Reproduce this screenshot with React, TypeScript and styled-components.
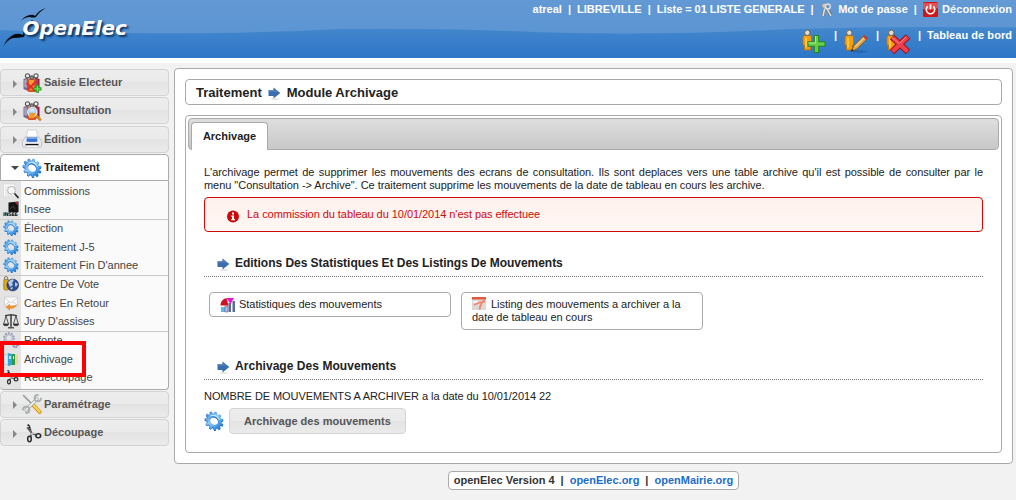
import React from "react";
import styled, { createGlobalStyle, css } from "styled-components";

const Global = createGlobalStyle`
  * { box-sizing: border-box; }
  body { margin: 0; width: 1016px; height: 500px; overflow: hidden; background: #f2f2f2;
    font-family: "Liberation Sans", Arial, sans-serif; font-size: 11px; line-height: 13px; color: #222; }
`;

/* ---------- icons ---------- */
type IconProps = { size: number };

const gearTeeth = 11;
const gearPath = Array.from({ length: gearTeeth }, (_, i) => {
  const step = (Math.PI * 2) / gearTeeth;
  const at = (r: number, k: number) => {
    const a = (i + k) * step;
    return `${(10 + r * Math.cos(a)).toFixed(2)} ${(10 + r * Math.sin(a)).toFixed(2)}`;
  };
  return `${i ? "L" : "M"}${at(7.6, 0)}L${at(9.9, 0.15)}L${at(9.9, 0.5)}L${at(7.6, 0.65)}`;
}).join("") + "ZM14.600 10A4.600 4.600 0 1 0 5.400 10A4.600 4.600 0 1 0 14.600 10Z";

const Gear = ({ size }: IconProps) => (
  <svg width={size} height={size} viewBox="0 0 20 20">
    <defs>
      <linearGradient id="gearFill" x1="0" y1="0" x2="1" y2="0">
        <stop offset="0" stopColor="#3c8ee0" /><stop offset=".4" stopColor="#8fd0ff" /><stop offset=".7" stopColor="#56a9f2" /><stop offset="1" stopColor="#1c74cf" />
      </linearGradient>
    </defs>
    <g transform="rotate(45 10 10) translate(0 1.200) scale(1 .86)">
      <path d={gearPath} fill="#1f66b8" fillRule="evenodd" transform="translate(.5 .9)" />
      <path d={gearPath} fill="url(#gearFill)" fillRule="evenodd" stroke="#3a86d3" strokeWidth=".4" />
      <path d="M4 9A6.300 6.300 0 0 1 13 4.600" fill="none" stroke="#c4e8ff" strokeWidth="1.100" />
    </g>
  </svg>
);

const GreyGears = ({ size }: IconProps) => (
  <svg width={size} height={size} viewBox="0 0 16 16" fill="none">
    <circle cx="6" cy="6" r="4.8" stroke="#8d93ac" strokeWidth="2" strokeDasharray="1.8 1.2" />
    <circle cx="6" cy="6" r="3.5" stroke="#b8bfd2" strokeWidth="2" />
    <circle cx="12.3" cy="12.5" r="2.6" stroke="#777d9a" strokeWidth="1.8" strokeDasharray="1.5 .8" />
    <circle cx="12.3" cy="12.5" r="1.7" stroke="#a9aec4" strokeWidth="1" />
  </svg>
);

const PeopleBase = () => (
  <>
    <path d="M1.500 6l4.500-1.500V18l-4.500-2z" fill="#77678f" /><path d="M2.300 7l2.500-1v9l-2.500-1z" fill="#aaa3bd" />
    <path d="M13 4.500l4.500 1.500v10L13 18z" fill="#8d1f45" /><path d="M14 6l2 .8v7l-2 1z" fill="#b83b58" />
    <rect x="6" y="5.500" width="8" height="13.500" rx="1" fill="#d9541f" />
    <path d="M7 7h5v10H7z" fill="#f59c35" />
    <g fill="#f1f1f1" stroke="#555" strokeWidth="1.100">
      <circle cx="5.500" cy="2.800" r="2.100" /><circle cx="14" cy="2.800" r="2.100" /><circle cx="9.800" cy="4.600" r="1.700" fill="#999" />
    </g>
  </>
);
const PeopleAdd = ({ size }: IconProps) => (
  <svg width={size} height={size} viewBox="0 0 20 20">
    <PeopleBase />
    <path d="M4.500 10l9 8M14 8.500l-8.500 8.500" stroke="#e32b28" strokeWidth="2" />
    <path d="M15.500 11.800v8M11.500 15.800h8" stroke="#2d9b24" strokeWidth="3.200" /><path d="M15.500 12.800v6M12.500 15.800h6" stroke="#74dd57" strokeWidth="1.300" />
  </svg>
);
const PeopleSearch = ({ size }: IconProps) => (
  <svg width={size} height={size} viewBox="0 0 20 20">
    <PeopleBase />
    <path d="M14 14.500l4 4" stroke="#d27f16" strokeWidth="2.600" strokeLinecap="round" />
    <circle cx="10.300" cy="11" r="4.600" fill="#a9d3ef" stroke="#e1e8ee" strokeWidth="1.400" />
    <path d="M7 12h6.600l-1.500 4.500H8z" fill="#f59a25" /><path d="M8 8.500q2-1.500 4.500 0v2H8z" fill="#d7ecfa" />
  </svg>
);
const Printer = ({ size }: IconProps) => (
  <svg width={size} height={size} viewBox="0 0 20 20">
    <path d="M5.500 1h9l1 8h-11z" fill="#fff" stroke="#c9ccd3" strokeWidth=".8" />
    <path d="M3 8h14l2.500 4.500v4.200q0 1.300-1.300 1.300H1.800Q.5 18 .5 16.700V12.500z" fill="#e9ebf0" stroke="#b4b8c1" strokeWidth=".8" />
    <path d="M5 8h10l.6 4.500q-5.600 1-11.200 0z" fill="#3d74cf" /><path d="M5.500 8h9l.3 1.800H5.200z" fill="#85aeea" />
    <path d="M3.500 15.600h13" stroke="#111" strokeWidth="1.400" /><path d="M4.500 17.300h11" stroke="#fff" />
  </svg>
);
const Tools = ({ size }: IconProps) => (
  <svg width={size} height={size} viewBox="0 0 20 20" fill="none" strokeLinecap="round">
    <path d="M1.500 1.500l9.500 9.500" stroke="#999" strokeWidth="1.600" />
    <path d="M11.500 11.500l6.200 6.500" stroke="#c99115" strokeWidth="3.800" /><path d="M11.500 11.300l6.200 6.500" stroke="#ffd34d" strokeWidth="2.200" />
    <path d="M4 16L15 5" stroke="#9ca1a4" strokeWidth="3.200" /><path d="M4 16L15 5" stroke="#eceeee" strokeWidth="1.900" />
    <path d="M15.800 1A3.200 3.200 0 1 0 19 4.500M4.200 19A3.200 3.200 0 1 0 1 15.600" stroke="#a9aeb1" strokeWidth="1.800" />
  </svg>
);
const Scissors = ({ size }: IconProps) => (
  <svg width={size} height={size} viewBox="0 0 20 20" fill="none">
    <path d="M7 2l2.700 9-1.500 3M5 4.500l5.500 6.500 4 1" stroke="#666" strokeWidth="1.700" />
    <path d="M6 1.500l2 5" stroke="#111" strokeWidth="1.700" strokeDasharray="1.500 1" />
    <ellipse cx="7.500" cy="16" rx="1.800" ry="2.700" stroke="#2b2b2b" strokeWidth="1.500" />
    <ellipse cx="16.300" cy="12.800" rx="2.400" ry="2" stroke="#2b2b2b" strokeWidth="1.500" />
    <circle cx="10" cy="11" r="1" fill="#ddd" />
  </svg>
);
const PageSearch = ({ size }: IconProps) => (
  <svg width={size} height={size} viewBox="0 0 16 16">
    <path d="M.5 1h11l1 12-12 1z" fill="#fafafa" stroke="#d3d3d3" strokeWidth=".6" />
    <path d="M2 4h8M2 6h5M2 8h4M2 10h5M2 12h7" stroke="#ccc" strokeWidth=".7" />
    <circle cx="8.500" cy="7.300" r="3.900" fill="#f5f7f8" stroke="#b5b5b5" strokeWidth="1" />
    <path d="M11.500 10.500l4 4.500" stroke="#222" strokeWidth="1.600" />
  </svg>
);
const InseeWrap = styled.div`display: flex; flex-direction: column; align-items: flex-end; width: 16px; height: 16px;`;
const InseeLabel = styled.div`
  width: 16px; font: bold 5px/5px "DejaVu Sans", sans-serif; letter-spacing: -0.4px; color: #111;
`;
const Insee = () => (
  <InseeWrap>
    <svg width="11" height="11" viewBox="0 0 11 11">
      <path d="M.5 1.500L10.500.5v10.500H.5z" fill="#141414" /><path d="M6.500 1.400l3.500-.4v3z" fill="#c7202e" />
      <path d="M2 8l3-3 2 3" stroke="#555" strokeWidth=".7" fill="none" />
    </svg>
    <InseeLabel>INSEE</InseeLabel>
  </InseeWrap>
);
const Globe = ({ size }: IconProps) => (
  <svg width={size} height={size} viewBox="0 0 16 16">
    <rect x=".8" y="3" width="5" height="11" rx="1.500" fill="#e9ac19" stroke="#785a10" strokeWidth=".6" />
    <circle cx="3" cy="2.200" r="1.700" fill="#e9dfba" stroke="#555" strokeWidth=".7" />
    <circle cx="9.700" cy="9" r="5.900" fill="#2d4f91" stroke="#202d50" strokeWidth=".6" />
    <path d="M5 6q4-4 6-2l-2 3 1 2-3 2zM12 6l3 2-2 3-1-1zM7 12l3-1-1 3z" fill="#b4cbe9" />
  </svg>
);
const Mail = ({ size }: IconProps) => (
  <svg width={size} height={size} viewBox="0 0 16 16">
    <rect x="1.500" y="2" width="13" height="9" fill="#fafafa" stroke="#cfcfcf" strokeWidth=".8" /><path d="M2 3l6 5 6-5M2 10l4-3M14 10l-4-3" fill="none" stroke="#c8c8c8" strokeWidth=".8" />
    <path d="M2.500 12l4.500-3.300v2q4 0 7-1-2 4.300-7 4v2z" fill="#ee9135" />
  </svg>
);
const Scales = ({ size }: IconProps) => (
  <svg width={size} height={size} viewBox="0 0 16 16" fill="none" stroke="#333" strokeWidth=".8">
    <path d="M2 2.800q6-2 12 0" strokeWidth="1.200" /><path d="M8 1v13" strokeWidth="1.400" /><path d="M5 14.800h6" strokeWidth="1.200" />
    <path d="M3 3L.7 11M3 3l2.500 8M13 3l-2.500 8M13 3l2.300 8" /><path d="M.3 11h5.400l-1 1.600H1.200zM10.300 11h5.400l-1 1.600h-3.500z" fill="#333" />
  </svg>
);
const Binders = ({ size }: IconProps) => (
  <svg width={size} height={size} viewBox="0 0 16 16">
    <path d="M1 4l4-1v11l-4-1.500z" fill="#d7eff8" stroke="#8cb8ca" strokeWidth=".6" />
    <path d="M5 2l4 1v11l-4 1z" fill="#35a5cf" /><path d="M6.200 5h1.600v3H6.200z" fill="#e5f7ff" />
    <path d="M9 3h3v11H9z" fill="#2c9951" /><path d="M12 3l3 1v9l-3 1z" fill="#f1d592" /><path d="M10 5h1v3h-1z" fill="#dfffe7" />
  </svg>
);
const BlueArrow = ({ size }: IconProps) => (
  <svg width={size} height={size} viewBox="0 0 13 13">
    <ellipse cx="7" cy="12" rx="4.500" ry=".7" fill="#ddd" />
    <path d="M.5 3.300h5V.6l6.800 5.500-6.800 5.500V9H.5z" fill="#3a6cae" /><path d="M.5 3.300h5V1l5 4H.5z" fill="#5584bd" opacity=".6" />
  </svg>
);
const Keys = () => (
  <svg width="12" height="16" viewBox="0 0 12 16" fill="none">
    <path d="M4 5l-2 9M5 5l5 9M2.500 11l-1.300-.5M9 11l1.500-.7" stroke="#777" strokeWidth="2.600" />
    <path d="M4 5l-2 9M5 5l5 9" stroke="#e2e2e2" strokeWidth="1.500" />
    <circle cx="3.300" cy="3.700" r="2.500" fill="#c8c8c8" stroke="#888" strokeWidth=".8" /><circle cx="6.800" cy="4.500" r="2.500" stroke="#ddd" strokeWidth="1.400" />
  </svg>
);
const Power = () => (
  <svg width="15" height="15" viewBox="0 0 15 15" fill="none">
    <rect width="15" height="15" rx="1.500" fill="#cf1717" /><path d="M0 1h15v5Q8 9 0 7z" fill="#e35252" />
    <path d="M4.800 4.400a4.200 4.200 0 1 0 5.400 0" stroke="#fff" strokeWidth="1.600" /><path d="M7.500 2.300v5" stroke="#fff" strokeWidth="1.700" />
  </svg>
);
const PersonBody = () => (
  <>
    <path d="M1 8.500q0-2 2-2h4.500q2 0 2 2v7.500H8.300v5H2.500v-5H1z" fill="#f79f0b" stroke="#bf7406" strokeWidth=".8" />
    <path d="M3 8.500h2v10H3z" fill="#ffc53f" /><circle cx="5.300" cy="3.800" r="2.700" fill="#e3dccb" stroke="#6b5b45" strokeWidth=".9" />
  </>
);
const Person = ({ kind }: { kind: "add" | "edit" | "delete" }) => (
  <svg width="26" height="26" viewBox="0 0 26 26">
    <PersonBody />
    {kind === "add" && <><path d="M14.500 6v18M5.500 15h18" stroke="#28821e" strokeWidth="5.400" /><path d="M14.500 7v16M6.500 15h16" stroke="#63ce4b" strokeWidth="3.400" /><path d="M13.500 7v7H6.500" stroke="#a7ec95" fill="none" /></>}
    {kind === "edit" && <><ellipse cx="15" cy="22.500" rx="8" ry="1.500" fill="#1f4d8d" opacity=".4" /><path d="M7 22.500l2.500-5.500L20 6.500l3.500 3.200L13 20z" fill="#dba14c" stroke="#75501e" strokeWidth=".8" /><path d="M11 18L21 8" stroke="#f5ce86" strokeWidth="1.200" /><path d="M18.800 7.600l1.700-1.700 3.500 3.300-1.700 1.700z" fill="#c13a34" /><path d="M7 22.500l1-2.500 1.700 1.500z" fill="#222" /></>}
    {kind === "delete" && <><path d="M6 8L22 23M22 7.500L6 23" stroke="#9e101d" strokeWidth="6.400" /><path d="M6.500 8.500L21.500 22.500M21.500 8L6.500 22.500" stroke="#ee3f4b" strokeWidth="4.400" /><path d="M6 8.500l7.500 6L20 8" stroke="#f7868c" fill="none" /></>}
  </svg>
);
const ChartIcon = () => (
  <svg width="16" height="16" viewBox="0 0 16 16">
    <path d="M1 10h4v5H1z" fill="#62b8e9" /><path d="M5 9h3v6H5z" fill="#c7b3da" stroke="#574b87" strokeWidth=".5" /><path d="M8.500 6h2.500v9H8.500zM12.500 4H15v11h-2.500z" fill="#5b6c96" />
    <path d="M.5 8.500q0-6 6-7.500l2 7.500z" fill="#cf1220" /><path d="M6.500 1h7.500l-3.500 6z" fill="#e615d2" />
  </svg>
);
const PdfIcon = () => (
  <svg width="14" height="13" viewBox="0 0 14 13">
    <path d="M0 0h14v13H0z" fill="#ddd9d7" /><path d="M0 0h14v2.500H0z" fill="#e3573e" /><path d="M1 4h5v2H1z" fill="#f8f8f8" /><path d="M2 8q5-3 11-3.500M12.500 3q-4 3-5 9.500" stroke="#ee8a74" strokeWidth="2" fill="none" />
  </svg>
);
const ErrorIcon = () => (
  <svg width="12" height="13" viewBox="0 0 12 13">
    <circle cx="6" cy="6.500" r="6" fill="#cd0a0a" /><path d="M5 2.500h2v2H5zM4.100 5.500H7V9h1v1.300H4V9h1V6.700h-.9z" fill="#fff" />
  </svg>
);

/* ---------- header ---------- */
const Header = styled.header`
  position: relative; height: 63px; border-bottom: 5px solid #fff; display: flex; justify-content: space-between;
  background: linear-gradient(#4a8bd0 0, #4286cc 29px, #2d76c8 58px);
`;
const Wave = styled.svg`position: absolute; inset: 0;`;
const Brand = styled.div`position: relative; width: 140px; height: 58px; padding: 15px 0 0 22.500px;`;
const Birds = styled.svg`position: absolute; left: 0; top: 0;`;
const BrandName = styled.span`
  position: relative; display: block; font: italic bold 20px/26px "DejaVu Sans", sans-serif; letter-spacing: -0.1px;
  color: #fff; text-shadow: 2px 2px 2px #123662;
`;
const Links = styled.nav`
  position: relative; display: flex; flex-direction: column; align-items: flex-end; padding-right: 4px; color: #fff; font-weight: bold;
`;
const TopLine = styled.div`display: flex; align-items: center; height: 19px; white-space: pre;`;
const ActionLine = styled.div`display: flex; height: 39px; padding-top: 10px; white-space: pre;`;
const IconGap = styled.span<{ $after: number }>`display: flex; margin-right: ${p => p.$after}px;`;
const Pipe = styled.span<{ $l?: number; $r?: number }>`margin: 0 ${p => p.$r ?? 6}px 0 ${p => p.$l ?? 6}px;`;
const Tracked = styled.span<{ $by: number }>`letter-spacing: ${p => p.$by}px;`;

/* ---------- sidebar ---------- */
const Body = styled.div`display: flex; align-items: flex-start; padding-top: 5px;`;
const Sidebar = styled.aside`width: 169px; padding-top: 1px; margin-right: 5px; display: flex; flex-direction: column; gap: 1.35px;`;
const MenuHead = styled.div<{ $open?: boolean }>`
  height: 27px; display: flex; align-items: center; border: 1px solid #d3d3d3; border-radius: 4px; padding-left: 12px;
  font-weight: bold; color: #555; background: linear-gradient(#ededed 0, #eaeaea 49%, #e3e3e3 50%, #ebebeb 100%);
  svg { flex: none; }
  ${p => p.$open && css`background: #fff; border-color: #aaa; border-radius: 4px 4px 0 0; color: #212121;`}
`;
const Caret = styled.span<{ $open?: boolean }>`
  margin: 2px 5px 0 0; width: 4px; border: solid transparent; border-width: 4px 0 4px 4px; border-left-color: #888;
  ${p => p.$open && css`margin: 1px 3px 0 -2px; width: 8px; border-width: 4px 4px 0; border-color: #454545 transparent transparent;`}
`;
const HeadText = styled.span`margin-left: 2px;`;
const SubMenu = styled.div`
  height: 209px; margin: -1.35px 0 -0.4px; padding-top: 1.95px; border: solid #aaa; border-width: 0 1px 1px 0; border-radius: 0 0 4px 4px;
  background: linear-gradient(90deg, #e3e3e3 21px, #fafafa 21px);
`;
const SubItem = styled.div`
  height: 18px; display: flex; align-items: flex-start; gap: 5px; padding-left: 3px; color: #444;
  > span { margin-top: 2px; }
`;
const Group = styled.div`
  & + & { border-top: 1px solid #c9c9c9; }
  & + & ${SubItem}:first-child { height: 19px; }
`;
const Marker = styled.div`position: absolute; left: 0; top: 341px; width: 86px; height: 36px; border: 4px solid #f00;`;

/* ---------- content ---------- */
const Panel = styled.main`
  width: 839px; height: 396px; border: 1px solid #aaa; border-radius: 4px; background: #fff; padding: 10px;
`;
const Crumb = styled.h2`
  height: 26px; margin: 0 0 10px; padding-left: 10px; border: 1px solid #aaa; border-radius: 4px;
  display: flex; align-items: center; font-size: 13px; svg { margin: 2px 6px 0 6px; }
`;
const Tabs = styled.section`height: 338px; border: 1px solid #aaa; border-radius: 4px; padding: 2px;`;
const TabBar = styled.div`
  height: 32px; padding: 3px 0 0 2px; border: 1px solid #aaa; border-radius: 4px; background: linear-gradient(#dedede, #c8c8c8);
`;
const Tab = styled.div`
  width: 77px; height: 28px; background: #fff; border: 1px solid #aaa; border-bottom: 0; border-radius: 4px 4px 0 0;
  text-align: center; font-weight: bold; line-height: 26px;
`;
const TabBody = styled.div`padding: 16px 16px 0;`;
const Intro = styled.p`margin: 0 0 5px; text-align: justify; letter-spacing: -0.04px;`;
const Alert = styled.div`
  height: 35px; display: flex; padding: 10px 22px; border: 1px solid #cd0a0a; border-radius: 4px; color: #cd0a0a;
  letter-spacing: -0.05px; background: linear-gradient(#fef1ec, #fff7f4); svg { margin: 2px 8px 0 0; }
`;
const SubTitle = styled.h3<{ $top: number; $track: number }>`
  margin: ${p => p.$top}px 0 0; height: 22px; padding-left: 13px; display: flex; border-bottom: 1px dotted #777;
  font-size: 12px; line-height: 16px; letter-spacing: ${p => p.$track}px; svg { margin: 3px 5px 0 0; }
`;
const Cards = styled.div`display: flex; align-items: flex-start; gap: 10px; margin: 15px 0 0 5px;`;
const Card = styled.div<{ $h: number; $gap: number }>`
  width: 242px; height: ${p => p.$h}px; padding: 5px 10px; border: 1px solid #aaa; border-radius: 4px; letter-spacing: -0.03px;
  svg { float: left; margin: -1px ${p => p.$gap}px 0 0; }
`;
const Count = styled.p`margin: 10px 0 5px; letter-spacing: -0.065px;`;
const Action = styled.div`display: flex; align-items: center; gap: 5px;`;
const Button = styled.button`
  width: 177px; height: 26px; padding: 0 0 1px; border: 1px solid #d3d3d3; border-radius: 4px; color: #555;
  font: bold 11px "Liberation Sans", Arial, sans-serif; letter-spacing: 0.03px;
  background: linear-gradient(#ededed 0, #eaeaea 50%, #e3e3e3 51%, #ebebeb 100%);
`;
const Footer = styled.footer`
  width: 291px; height: 19px; margin: 7px 0 0 448px; border: 1px solid #aaa; border-radius: 4px; background: #fff;
  display: flex; align-items: center; justify-content: center; font-weight: bold; color: #333;
`;
const Link = styled.a`color: #1c6ec7;`;

const groups: [string, React.ReactNode][][] = [
  [["Commissions", <PageSearch size={16} />], ["Insee", <Insee />]],
  [["Élection", <Gear size={16} />], ["Traitement J-5", <Gear size={16} />], ["Traitement Fin D'annee", <Gear size={16} />]],
  [["Centre De Vote", <Globe size={16} />], ["Cartes En Retour", <Mail size={16} />], ["Jury D'assises", <Scales size={16} />]],
  [["Refonte", <GreyGears size={16} />], ["Archivage", <Binders size={16} />], ["Redecoupage", <Scissors size={16} />]],
];

const Menu = ({ label, icon, open }: { label: string; icon: React.ReactNode; open?: boolean }) => (
  <MenuHead $open={open}><Caret $open={open} />{icon}<HeadText>{label}</HeadText></MenuHead>
);

export default function App() {
  return (
    <>
      <Global />
      <Header>
        <Wave width="1016" height="58">
          <defs><linearGradient id="wave" x1="0" y1="0" x2="0" y2="1"><stop stopColor="#6399d4" /><stop offset="1" stopColor="#5b95d3" /></linearGradient></defs>
          <path d="M0 0H1016V27.500Q900 26 790 29Q700 33.500 620 33.500Q560 33 510 31Q430 28 340 29Q260 33 180 33.300Q80 33 0 30z" fill="url(#wave)" />
        </Wave>
        <Brand>
          <Birds width="60" height="58">
            <path d="M20 22q4-6 10-7 3-1 5 1 4-6 11-8-6 3-10 9-3 1-6 0-6 0-10 5z" fill="#050a10" />
            <path d="M3 47q4-10 12-13 5-1 8 1 0-8 9-15l4 3q-10 5-12 14-6 1-11 1-6 2-10 9z" fill="#050a10" />
          </Birds>
          <BrandName>OpenElec</BrandName>
        </Brand>
        <Links>
          <TopLine>
            atreal<Pipe>|</Pipe><Tracked $by={0.05}>LIBREVILLE</Tracked><Pipe>|</Pipe><Tracked $by={-0.04}>Liste = 01 LISTE GENERALE</Tracked><Pipe $r={7.5}>|</Pipe>
            <IconGap $after={5}><Keys /></IconGap>Mot de passe<Pipe>|</Pipe>
            <IconGap $after={4}><Power /></IconGap><Tracked $by={0.09}>Déconnexion</Tracked>
          </TopLine>
          <ActionLine>
            <IconGap $after={6}><Person kind="add" /></IconGap><Pipe $l={0} $r={7}>|</Pipe>
            <IconGap $after={6}><Person kind="edit" /></IconGap><Pipe $l={0} $r={7}>|</Pipe>
            <IconGap $after={6}><Person kind="delete" /></IconGap><Pipe $l={0} $r={6}>|</Pipe>
            <Tracked $by={0.05}>Tableau de bord</Tracked>
          </ActionLine>
        </Links>
      </Header>
      <Body>
        <Sidebar>
          <Menu label="Saisie Electeur" icon={<PeopleAdd size={20} />} />
          <Menu label="Consultation" icon={<PeopleSearch size={20} />} />
          <Menu label="Édition" icon={<Printer size={20} />} />
          <Menu label="Traitement" icon={<Gear size={20} />} open />
          <SubMenu>
            {groups.map((g, i) => (
              <Group key={i}>{g.map(([label, icon]) => <SubItem key={label}>{icon}<span>{label}</span></SubItem>)}</Group>
            ))}
          </SubMenu>
          <Menu label="Paramétrage" icon={<Tools size={20} />} />
          <Menu label="Découpage" icon={<Scissors size={20} />} />
        </Sidebar>
        <Panel>
          <Crumb>Traitement<BlueArrow size={13} />Module Archivage</Crumb>
          <Tabs>
            <TabBar><Tab>Archivage</Tab></TabBar>
            <TabBody>
              <Intro>L'archivage permet de supprimer les mouvements des ecrans de consultation. Ils sont deplaces vers une table archive qu'il est possible de consulter par le menu&nbsp;"Consultation -&gt; Archive". Ce traitement supprime les mouvements de la date de tableau en cours les archive.</Intro>
              <Alert><ErrorIcon />La commission du tableau du 10/01/2014 n'est pas effectuee</Alert>
              <SubTitle $top={23} $track={-0.03}><BlueArrow size={13} />Editions Des Statistiques Et Des Listings De Mouvements</SubTitle>
              <Cards>
                <Card $h={25} $gap={3}><ChartIcon />Statistiques des mouvements</Card>
                <Card $h={38} $gap={5}><PdfIcon />Listing des mouvements a archiver a la date de tableau en cours</Card>
              </Cards>
              <SubTitle $top={28} $track={0.05}><BlueArrow size={13} />Archivage Des Mouvements</SubTitle>
              <Count>NOMBRE DE MOUVEMENTS A ARCHIVER a la date du 10/01/2014 22</Count>
              <Action><Gear size={20} /><Button>Archivage des mouvements</Button></Action>
            </TabBody>
          </Tabs>
        </Panel>
      </Body>
      <Footer>openElec Version 4<Pipe>|</Pipe><Link>openElec.org</Link><Pipe>|</Pipe><Link>openMairie.org</Link></Footer>
      <Marker />
    </>
  );
}
